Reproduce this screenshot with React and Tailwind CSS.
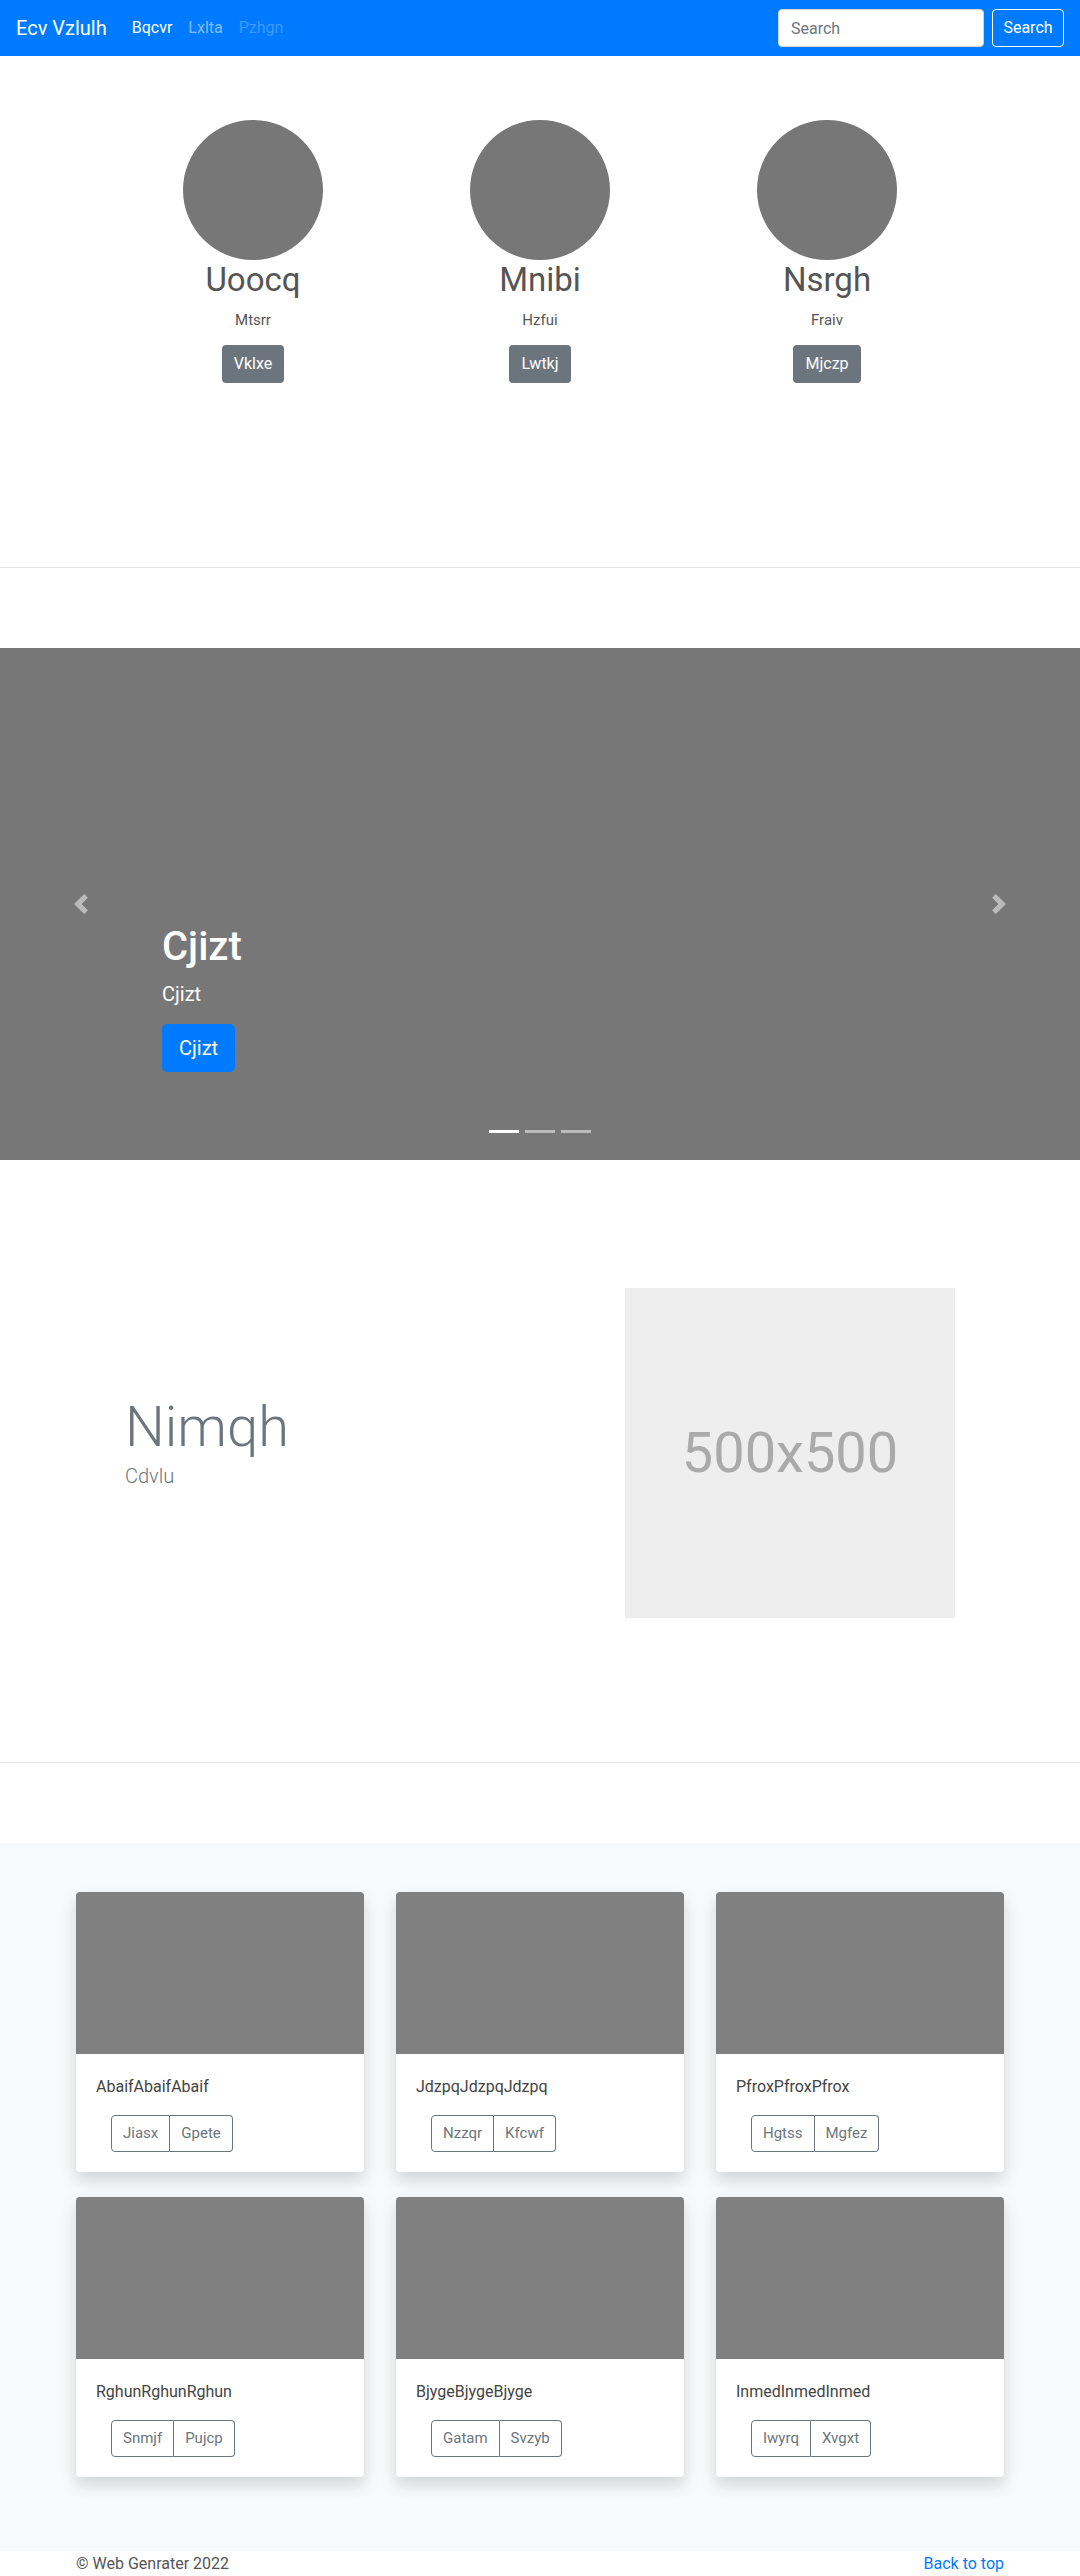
import React from "react";

const people = [
  { name: "Uoocq", sub: "Mtsrr", btn: "Vklxe" },
  { name: "Mnibi", sub: "Hzfui", btn: "Lwtkj" },
  { name: "Nsrgh", sub: "Fraiv", btn: "Mjczp" },
];

const cards = [
  { text: "AbaifAbaifAbaif", a: "Jiasx", b: "Gpete" },
  { text: "JdzpqJdzpqJdzpq", a: "Nzzqr", b: "Kfcwf" },
  { text: "PfroxPfroxPfrox", a: "Hgtss", b: "Mgfez" },
  { text: "RghunRghunRghun", a: "Snmjf", b: "Pujcp" },
  { text: "BjygeBjygeBjyge", a: "Gatam", b: "Svzyb" },
  { text: "InmedInmedInmed", a: "Iwyrq", b: "Xvgxt" },
];

const Navbar = () => (
  <nav className="h-[56px] bg-[#007bff] flex items-center justify-between px-4">
    <div className="flex items-center">
      <span className="text-[20px] text-white mr-[17px]">Ecv Vzlulh</span>
      <a className="px-2 text-white text-[16px]">Bqcvr</a>
      <a className="px-2 text-white/50 text-[16px]">Lxlta</a>
      <a className="px-2 text-white/25 text-[16px]">Pzhgn</a>
    </div>
    <div className="flex items-center gap-2">
      <input
        placeholder="Search"
        className="w-[206px] h-[38px] rounded bg-white px-3 text-[16px] placeholder:text-[#6c757d] outline-none border border-[#ced4da]"
      />
      <button className="w-[72px] h-[38px] rounded border border-white text-white text-[16px]">Search</button>
    </div>
  </nav>
);

const Marketing = () => (
  <section className="pt-[64px] pb-[184px] flex justify-center">
    {people.map((p) => (
      <div key={p.name} className="w-[287px] flex flex-col items-center text-center">
        <div className="w-[140px] h-[140px] rounded-full bg-[#777]" />
        <h2 className="text-[33px] leading-[1.2] text-[#555] mb-2">{p.name}</h2>
        <p className="text-[15px] leading-6 text-[#555] mb-[13px]">{p.sub}</p>
        <button className="h-[38px] px-3 rounded bg-[#6c757d] text-white text-[16px]">{p.btn}</button>
      </div>
    ))}
  </section>
);

const Carousel = () => (
  <div className="relative h-[512px] bg-[#777]">
    <svg className="absolute left-[71px] top-[246px] w-5 h-5" viewBox="0 0 8 8" fill="rgba(255,255,255,0.5)">
      <path d="M5.25 0l-4 4 4 4 1.5-1.5L4.25 4l2.5-2.5L5.25 0z" />
    </svg>
    <svg className="absolute right-[71px] top-[246px] w-5 h-5" viewBox="0 0 8 8" fill="rgba(255,255,255,0.5)">
      <path d="M2.75 0l-1.5 1.5L3.75 4l-2.5 2.5L2.75 8l4-4-4-4z" />
    </svg>
    <div className="absolute left-[162px] bottom-[88px] text-white">
      <h1 className="text-[40px] leading-[1.2] font-medium mb-2">Cjizt</h1>
      <p className="text-[20px] leading-[30px] mb-[15px]">Cjizt</p>
      <button className="h-[48px] px-[17px] rounded-[5px] bg-[#007bff] text-[20px] text-white">Cjizt</button>
    </div>
    <div className="absolute bottom-[27px] left-0 right-0 flex justify-center">
      <span className="w-[30px] h-[3px] mx-[3px] bg-white" />
      <span className="w-[30px] h-[3px] mx-[3px] bg-white/50" />
      <span className="w-[30px] h-[3px] mx-[3px] bg-white/50" />
    </div>
  </div>
);

const Featurette = () => (
  <section className="pt-[128px] pb-[144px] px-[125px] flex items-center justify-between">
    <div>
      <h2 className="text-[56px] leading-[1.2] font-light text-[#6c757d] mb-0">Nimqh</h2>
      <p className="text-[20px] leading-[30px] font-light text-[#6c757d] mb-5">Cdvlu</p>
    </div>
    <div className="w-[330px] h-[330px] bg-[#eee] flex items-center justify-center">
      <span className="text-[56px] text-[#aaa]">500x500</span>
    </div>
  </section>
);

const Album = () => (
  <section className="bg-[#f8f9fa] pt-[49px] pb-[74px]">
    <div className="w-[928px] mx-auto grid grid-cols-3 gap-x-[32px] gap-y-[25px]">
      {cards.map((c) => (
        <div key={c.text} className="h-[280px] bg-white rounded shadow-[0_8px_16px_rgba(0,0,0,0.15)] overflow-hidden flex flex-col">
          <div className="h-[162px] bg-[#808080]" />
          <div className="px-5 pt-[21px]">
            <p className="text-[16px] leading-6 text-[#444] mb-4">{c.text}</p>
            <div className="ml-[15px] inline-flex">
              <button className="h-[37px] px-[11px] text-[15px] text-[#6c757d] border border-[#6c757d] rounded-l">{c.a}</button>
              <button className="h-[37px] px-[11px] text-[15px] text-[#6c757d] border border-l-0 border-[#6c757d] rounded-r">{c.b}</button>
            </div>
          </div>
        </div>
      ))}
    </div>
  </section>
);

export default function App() {
  return (
    <div className="bg-white min-h-screen" style={{ fontFamily: "Roboto, 'Noto Sans', sans-serif" }}>
      <Navbar />
      <Marketing />
      <hr className="border-0 border-t border-[#e5e5e5]" />
      <div className="pt-[80px]">
        <Carousel />
      </div>
      <Featurette />
      <hr className="border-0 border-t border-[#e5e5e5]" />
      <div className="pt-[80px]">
        <Album />
      </div>
      <footer className="px-[76px] pt-px pb-12 flex justify-between text-[16px] leading-6">
        <span className="text-[#555]">© Web Genrater 2022</span>
        <a className="text-[#007bff]">Back to top</a>
      </footer>
    </div>
  );
}
